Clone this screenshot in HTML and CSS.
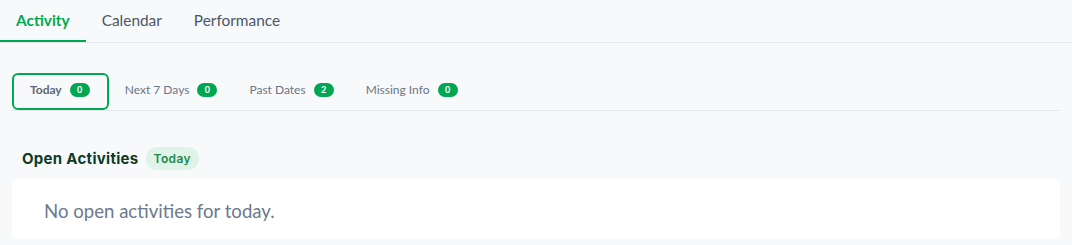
FILE: index.html
```html
<!DOCTYPE html>
<html lang="en">
<head>
<meta charset="utf-8">
<title>Activity</title>
<link rel="stylesheet" href="styles.css">
</head>
<body>
<nav class="tabs">
  <a class="tab tab-active">Activity</a>
  <a class="tab">Calendar</a>
  <a class="tab">Performance</a>
</nav>
<main class="content">
  <div class="subtabs">
    <div class="subtab subtab-active">Today <span class="badge">0</span></div>
    <div class="subtab">Next 7 Days <span class="badge">0</span></div>
    <div class="subtab">Past Dates <span class="badge">2</span></div>
    <div class="subtab">Missing Info <span class="badge">0</span></div>
  </div>
  <div class="section-head">
    <h2 class="section-title">Open Activities</h2>
    <span class="pill">Today</span>
  </div>
  <div class="card">
    <p class="empty">No open activities for today.</p>
  </div>
</main>
</body>
</html>
```

FILE: styles.css
```css
* { box-sizing: border-box; }
html, body { margin: 0; padding: 0; }
body {
  background: #f8f9fb;
  font-family: Lato, "Open Sans", sans-serif;
  color: #4a5568;
}
.tabs {
  display: flex;
  border-bottom: 1px solid #e3e6ea;
}
.tab {
  display: flex;
  align-items: center;
  height: 42px;
  padding: 0 16px;
  font-size: 15.4px;
  color: #4a5668;
  border-bottom: 2px solid transparent;
}
.tab-active {
  color: #00a84f;
  font-weight: 700;
  border-bottom-color: #00a84f;
}
.content {
  padding: 30px 12px 0;
}
.subtabs {
  display: flex;
  border-bottom: 1px solid #e3e6ea;
}
.subtab {
  display: flex;
  align-items: center;
  gap: 8px;
  height: 37px;
  padding: 0 14px 4px;
  border: 2px solid transparent;
  border-radius: 6px;
  font-size: 12px;
  color: #6b7686;
}
.subtab-active {
  padding-left: 16px;
  padding-right: 17px;
  border-color: #00a84f;
  font-weight: 700;
  color: #5d6777;
}
.badge {
  display: inline-flex;
  align-items: center;
  justify-content: center;
  width: 20px;
  height: 14px;
  border-radius: 7px;
  background: #00a651;
  color: #fff;
  font-size: 9px;
  font-weight: 700;
}
.section-head {
  display: flex;
  align-items: center;
  gap: 7px;
  margin-top: 36px;
  padding-left: 10px;
}
.section-title {
  margin: 0;
  font-family: Inter, sans-serif;
  font-size: 15px;
  font-weight: 700;
  letter-spacing: 0.3px;
  color: #0d3b2a;
}
.pill {
  display: inline-flex;
  align-items: center;
  height: 23px;
  padding: 0 8px;
  border-radius: 12px;
  background: #dff3e8;
  color: #1b8a4d;
  font-family: Inter, sans-serif;
  font-size: 12px;
  font-weight: 600;
  letter-spacing: 0.4px;
}
.card {
  margin-top: 9px;
  height: 60px;
  display: flex;
  align-items: center;
  padding: 3px 32px 0;
  background: #fff;
  border-radius: 6px;
}
.empty {
  margin: 0;
  font-size: 18.6px;
  color: #6b7a8c;
}
```
